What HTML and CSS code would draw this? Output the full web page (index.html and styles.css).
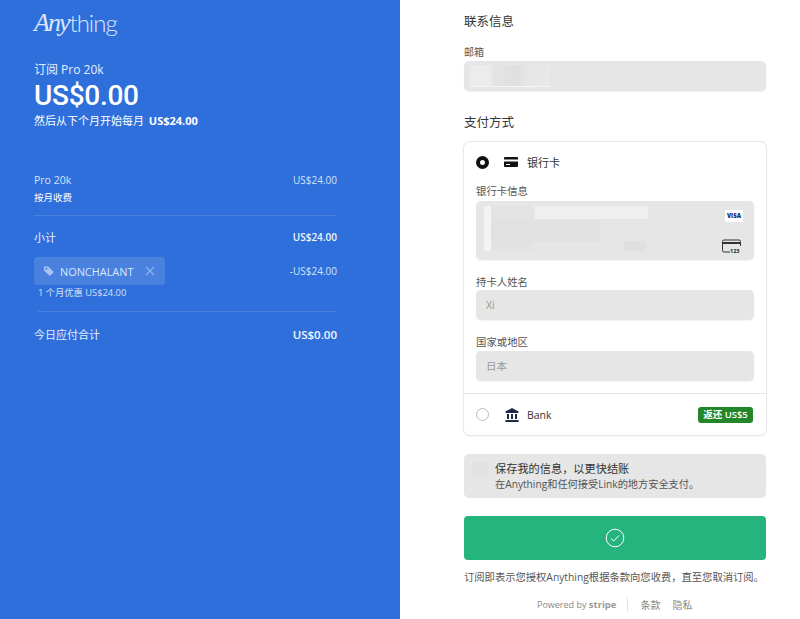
FILE: index.html
```html
<!DOCTYPE html>
<html>
  <head>
    <title>Anything Checkout</title>
    <link rel="stylesheet" href="styles.css">
  </head>
  <body>
    <div class="checkout">
      <div class="summary">
        <div class="logo"><span class="logo-any">Any</span><span class="logo-thing">thing</span></div>
        <div class="plan-title">订阅 Pro 20k</div>
        <div class="plan-price">US$0.00</div>
        <div class="plan-note">然后从下个月开始每月 <b>US$24.00</b></div>

        <div class="line line-item">
          <div>
            <div class="line-name">Pro 20k</div>
            <div class="line-sub">按月收费</div>
          </div>
          <div class="line-amount">US$24.00</div>
        </div>

        <div class="line line-subtotal">
          <div class="line-label">小计</div>
          <div class="line-strong">US$24.00</div>
        </div>

        <div class="line line-discount">
          <div class="chip">
            <svg class="chip-tag" width="12" height="12" viewBox="0 0 12 12"><path d="M1 1.5h4.2l5.6 5.6-3.9 3.9L1 5.4z" fill="#a9c4f2"/><circle cx="3.4" cy="3.8" r="1" fill="#4a80de"/></svg>
            <span>NONCHALANT</span>
            <svg class="chip-close" width="10" height="10" viewBox="0 0 10 10"><path d="M1 1l8 8M9 1l-8 8" stroke="#8fb2ee" stroke-width="1.2"/></svg>
          </div>
          <div class="line-amount">-US$24.00</div>
        </div>
        <div class="discount-note">1 个月优惠 US$24.00</div>

        <div class="line line-total">
          <div class="line-label">今日应付合计</div>
          <div class="total-amount">US$0.00</div>
        </div>
      </div>

      <div class="pay">
        <h2 class="section-title">联系信息</h2>
        <div class="field-label email-label">邮箱</div>
        <div class="field field-email">
          <span class="smudge smudge-a"></span>
          <span class="smudge smudge-b"></span>
        </div>

        <h2 class="section-title method-title">支付方式</h2>
        <div class="methods">
          <div class="method-head">
            <span class="radio radio-on"></span>
            <svg class="method-icon" width="14" height="10" viewBox="0 0 14 10"><path d="M1 0h12a1 1 0 0 1 1 1v1.5H0V1a1 1 0 0 1 1-1zM0 4.5h14V9a1 1 0 0 1-1 1H1a1 1 0 0 1-1-1zM2 7v1h4V7z" fill="#111"/></svg>
            <span class="method-name">银行卡</span>
          </div>
          <div class="card-form">
            <div class="field-label">银行卡信息</div>
            <div class="field field-card">
              <span class="smudge smudge-g"></span>
              <span class="smudge smudge-c"></span>
              <span class="smudge smudge-d"></span>
              <span class="smudge smudge-e"></span>
              <span class="smudge smudge-f"></span>
              <span class="visa">VISA</span>
              <svg class="cvc" width="19" height="14" viewBox="0 0 19 14"><path d="M8 13H2a1.500 1.500 0 0 1-1.500-1.500v-9A1.500 1.500 0 0 1 2 1h15a1.500 1.500 0 0 1 1.500 1.500V7" fill="none" stroke="#333" stroke-width="1"/><path d="M.5 3h18v2H.5z" fill="#333"/><text x="8" y="13.500" class="cvc-text">123</text></svg>
            </div>
            <div class="field-label name-label">持卡人姓名</div>
            <div class="field field-plain">Xi</div>
            <div class="field-label country-label">国家或地区</div>
            <div class="field field-plain field-country">日本</div>
          </div>
          <div class="method-bank">
            <span class="radio"></span>
            <svg class="method-icon" width="14" height="14" viewBox="0 0 14 14"><path d="M7 0l6.500 3.500V5H.5V3.500zM2 6h2v5H2zM6 6h2v5H6zM10 6h2v5h-2zM.5 12h13v2H.5z" fill="#1f2748"/></svg>
            <span class="method-name">Bank</span>
            <span class="cashback">返还 US$5</span>
          </div>
        </div>

        <div class="save-box">
          <span class="save-check"></span>
          <div>
            <div class="save-title">保存我的信息，以更快结账</div>
            <div class="save-sub">在Anything和任何接受Link的地方安全支付。</div>
          </div>
        </div>

        <button class="submit">
          <svg width="20" height="20" viewBox="0 0 20 20"><circle cx="10" cy="10" r="8.800" fill="none" stroke="#fff" stroke-width="1"/><path d="M6 10.300l2.800 2.700 5.200-5.600" fill="none" stroke="#fff" stroke-width="1"/></svg>
        </button>

        <div class="terms">订阅即表示您授权Anything根据条款向您收费，直至您取消订阅。</div>

        <div class="foot">
          <span>Powered by <b class="stripe">stripe</b></span>
          <span class="foot-sep"></span>
          <span class="foot-link">条款</span>
          <span class="foot-link">隐私</span>
        </div>
      </div>
    </div>
  </body>
</html>
```

FILE: styles.css
```css
html, body { margin: 0; height: 100%; overflow: hidden; }
body { font-family: "Open Sans", "Noto Sans CJK SC", sans-serif; background: #fff; color: #333; }

.checkout { display: grid; grid-template-columns: 400px 1fr; height: 619px; }

/* Left summary */
.summary { background: #2f6fdb; color: #e6eefc; padding: 0 63px 0 34px; font-size: 10px; }

.logo { height: 45px; display: flex; align-items: center; color: #dce7fb; line-height: 1; }
.logo-any { font-family: "Liberation Serif", serif; font-style: italic; font-size: 26px; letter-spacing: -2px; }
.logo-thing { font-family: "Lato", sans-serif; font-weight: 300; font-size: 24px; margin-left: 1px; letter-spacing: -1px; }

.plan-title { margin-top: 16px; font-size: 12px; line-height: 18px; }
.plan-price { margin-top: 3px; font-family: Roboto, sans-serif; font-size: 28px; font-weight: 500; line-height: 28px; letter-spacing: -0.3px; color: #fff; }
.plan-note { margin-top: 3px; font-size: 11px; line-height: 16px; color: #fff; }
.plan-note b { font-weight: 700; margin-left: 2px; }

.line { display: flex; justify-content: space-between; }
.line-item { margin-top: 43px; padding-bottom: 10px; border-bottom: 1px solid #4a80de; height: 33px; line-height: 17px; }
.line-name { color: #d4e2fa; font-size: 10.500px; }
.line-sub { color: #fff; font-size: 9.500px; }
.line-amount { color: #d4e2fa; }
.line-label { font-size: 11px; }
.line-strong { font-weight: 600; color: #f2f6fe; }
.line-subtotal { margin-top: 13px; line-height: 17px; }
.line-discount { margin-top: 11px; align-items: center; }

.chip { display: flex; align-items: center; height: 28px; width: 131px; box-sizing: border-box; padding: 0 10px 0 9px; background: #4a80de; border-radius: 4px; font-size: 10.900px; color: #dbe7fb; }
.chip-tag { flex: none; margin-right: 5px; }
.chip-close { flex: none; margin-left: auto; }

.discount-note { margin: 1px 0 0 4px; line-height: 14px; font-size: 9.300px; color: #d4e2fa; padding-bottom: 11px; border-bottom: 1px solid #4a80de; }
.line-total { margin-top: 14px; line-height: 18px; align-items: center; }
.total-amount { font-size: 11.500px; font-weight: 600; color: #f2f6fe; }

/* Right form */
.pay { padding: 0 34px 0 64px; }

.section-title { margin: 0; padding-top: 13px; font-size: 12.500px; font-weight: 400; line-height: 18px; color: #333; }
.method-title { padding-top: 23px; }

.field-label { font-size: 10.400px; line-height: 14px; color: #555; }
.email-label { margin-top: 14px; font-size: 10px; }

.field { position: relative; background: #e6e6e6; border-radius: 5px; box-shadow: 0 1px 2px rgba(0, 0, 0, 0.06); box-sizing: border-box; }
.field-email { height: 30px; margin-top: 2px; }
.field-card { height: 59px; margin-top: 3px; }
.field-plain { height: 30px; padding-left: 10px; line-height: 30px; font-size: 10.500px; color: #999; }
.field-label + .field-plain { margin-top: 1px; }
.field-label + .field-country { margin-top: 2px; }

.smudge { position: absolute; display: block; }
.smudge-a { left: 6px; top: 4px; width: 80px; height: 21px; background: #eaeaea; }
.smudge-b { left: 6px; top: 4px; width: 80px; height: 21px; background: linear-gradient(90deg, #ececec 25%, #e4e4e4 30%, #dfdfdf 60%, #e6e6e6 70%, #e9e9e9); border-bottom: 1px solid #f6f6f6; }
.smudge-g { left: 15px; top: 5px; width: 43px; height: 45px; background: #e3e3e3; }
.smudge-c { left: 8px; top: 5px; width: 7px; height: 45px; background: #f3f3f3; }
.smudge-d { left: 15px; top: 19px; width: 109px; height: 22px; background: #e1e1e1; }
.smudge-e { left: 59px; top: 5px; width: 113px; height: 13px; background: #efefef; }
.smudge-f { left: 148px; top: 40px; width: 22px; height: 10px; background: #e0e0e0; }

.visa { position: absolute; right: 11px; top: 9px; width: 18px; height: 12px; background: #fff; font-size: 6px; font-weight: 800; line-height: 12px; text-align: center; color: #1a2a6c; }
.cvc { position: absolute; right: 13px; top: 38px; }
.cvc-text { font-size: 5.500px; font-weight: 700; fill: #222; }

.methods { margin-top: 10px; height: 293px; box-sizing: border-box; background: #fff; border-radius: 6px; box-shadow: 0 0 0 1px #e8e8e8, 0 1px 3px rgba(0, 0, 0, 0.08); }

.method-head { display: flex; align-items: center; height: 40px; padding: 0 12px; }
.method-icon { flex: none; margin-left: 15px; }
.method-name { margin-left: 9px; font-size: 11px; color: #333; }

.radio { flex: none; box-sizing: border-box; width: 13px; height: 13px; border-radius: 50%; border: 1px solid #bbb; background: #fff; }
.radio-on { border: 4px solid #111; }

.card-form { padding: 2px 12px 0; }
.name-label { margin-top: 15px; }
.country-label { margin-top: 15px; }

.method-bank { display: flex; align-items: center; height: 41px; margin-top: 12px; padding: 0 13px 0 12px; border-top: 1px solid #e6e6e6; }
.method-bank .method-icon { margin-left: 16px; }
.method-bank .method-name { margin-left: 8px; font-size: 10.500px; }
.cashback { margin-left: auto; width: 55px; height: 16px; border-radius: 3px; background: #22862a; color: #fff; font-size: 9.500px; font-weight: 600; line-height: 16px; text-align: center; }

.save-box { display: flex; align-items: flex-start; height: 44px; box-sizing: border-box; margin-top: 19px; padding: 6px 0 0 9px; background: #e6e6e6; border-radius: 5px; }
.save-check { flex: none; box-sizing: border-box; width: 14px; height: 14px; margin: 2px 8px 0 0; border-radius: 3px; background: #e2e2e2; border: 1px solid #e0e0e0; }
.save-title { font-size: 11.200px; line-height: 17px; color: #333; }
.save-sub { font-size: 10.200px; line-height: 15px; color: #555; }

.submit { display: flex; align-items: center; justify-content: center; width: 100%; height: 44px; margin-top: 18px; padding: 0; border: none; border-radius: 4px; background: #25b47e; }

.terms { margin-top: 9px; font-size: 10.300px; line-height: 16px; color: #555; white-space: nowrap; }

.foot { display: flex; align-items: center; margin-top: 11px; padding-left: 73px; height: 16px; font-size: 9px; color: #888; }
.foot-sep { width: 1px; height: 15px; margin: 0 12px 0 11px; background: #e4e4e4; }
.foot-link { font-size: 10px; margin-right: 12px; }
.stripe { font-weight: 700; font-size: 9.500px; color: #999; }
```
